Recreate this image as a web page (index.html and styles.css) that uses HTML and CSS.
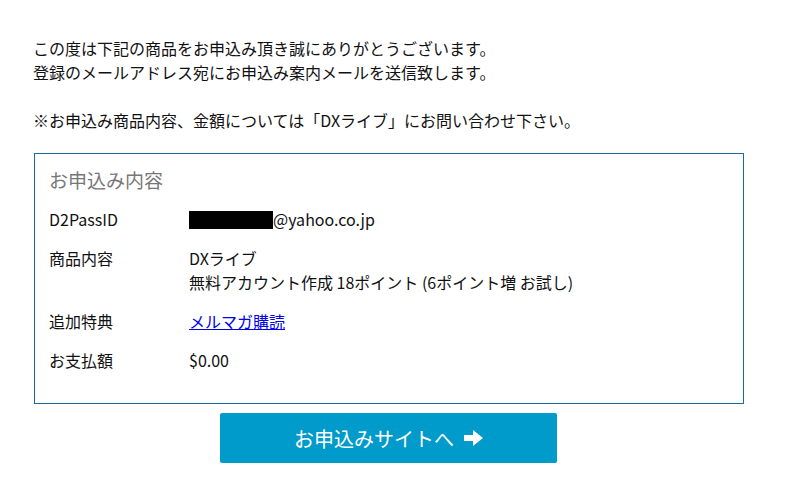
FILE: index.html
```html
<!DOCTYPE html>
<html lang="ja">
<head>
<meta charset="utf-8">
<link rel="stylesheet" href="styles.css">
</head>
<body>
<div class="page">
  <p class="intro">この度は下記の商品をお申込み頂き誠にありがとうございます。<br>登録のメールアドレス宛にお申込み案内メールを送信致します。</p>
  <p class="intro last">※お申込み商品内容、金額については「DXライブ」にお問い合わせ下さい。</p>
  <div class="box">
    <div class="box-title">お申込み内容</div>
    <div class="row">
      <div class="label">D2PassID</div>
      <div class="value"><span class="redact"></span>@yahoo.co.jp</div>
    </div>
    <div class="row">
      <div class="label">商品内容</div>
      <div class="value">DXライブ<br>無料アカウント作成 18ポイント (6ポイント増 お試し)</div>
    </div>
    <div class="row">
      <div class="label">追加特典</div>
      <div class="value"><a href="#" class="link">メルマガ購読</a></div>
    </div>
    <div class="row">
      <div class="label">お支払額</div>
      <div class="value">$0.00</div>
    </div>
  </div>
  <div class="btn-wrap">
    <a href="#" class="btn">お申込みサイトへ <svg class="arrow" width="19" height="16" viewBox="0 0 19 16"><path d="M0 5h9V0l10 8-10 8v-5H0z" fill="#fff"/></svg></a>
  </div>
</div>
</body>
</html>
```

FILE: styles.css
```css
html, body {
  margin: 0;
  padding: 0;
  background: #fff;
}
body {
  font-family: "Noto Sans CJK JP", "Noto Sans", sans-serif;
  font-size: 16px;
  color: #111;
}
.page {
  padding: 36px 0 0 33px;
  width: 711px;
}
.intro {
  margin: 0 0 24px 0;
  line-height: 24px;
}
.intro.last {
  margin-bottom: 21px;
}
.box {
  margin-left: 1px;
  border: 1px solid #1a6b9c;
  padding: 13px 14px 24px 14px;
  height: 212px;
}
.box-title {
  font-size: 19px;
  color: #777;
  line-height: 26px;
  margin-bottom: 14px;
}
.row {
  display: flex;
  line-height: 24px;
  margin-bottom: 15px;
}
.label {
  width: 140px;
  flex: none;
}
.value {
  flex: 1;
}
.redact {
  display: inline-block;
  width: 84px;
  height: 18px;
  background: #000;
  vertical-align: -3px;
}
.link {
  color: #0000ee;
  text-decoration: underline;
}
.btn-wrap {
  display: flex;
  padding-left: 187px;
  margin-top: 9px;
}
.btn {
  display: flex;
  align-items: center;
  justify-content: center;
  gap: 10px;
  width: 337px;
  height: 50px;
  background: #009acb;
  color: #fff;
  font-size: 20px;
  text-decoration: none;
  border-radius: 2px;
  box-shadow: 0 9px 0 -6px #bcbcbc;
}
.arrow {
  display: block;
}
```
